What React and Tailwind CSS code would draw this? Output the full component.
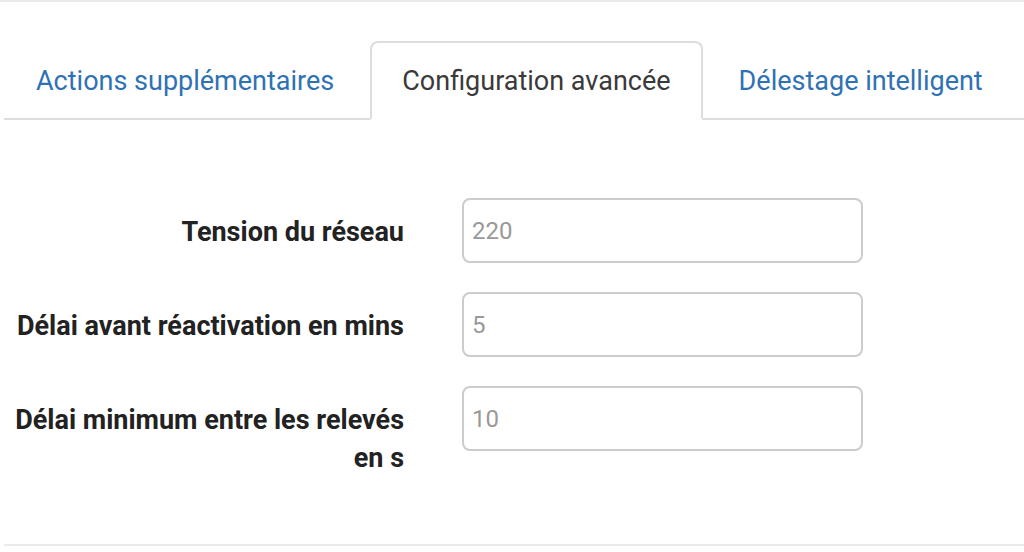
import React from "react";

const tabs = [
  { label: "Actions supplémentaires", active: false },
  { label: "Configuration avancée", active: true },
  { label: "Délestage intelligent", active: false },
];

const rows = [
  { label: ["Tension du réseau"], value: "220" },
  { label: ["Délai avant réactivation en mins"], value: "5" },
  { label: ["Délai minimum entre les relevés", "en s"], value: "10" },
];

export default function App() {
  return (
    <div
      className="w-[1024px] h-[552px] bg-white flex flex-col overflow-hidden"
      style={{ fontFamily: "Roboto, 'Liberation Sans', sans-serif" }}
    >
      <div className="h-[2px] bg-[#ebebeb] shrink-0" />
      <ul className="mt-[39px] ml-[4px] flex border-b-2 border-[#dddddd] shrink-0">
        {tabs.map((t) => (
          <li key={t.label} className="-mb-[2px] mr-[4px] shrink-0">
            <a
              className={
                t.active
                  ? "block whitespace-nowrap px-[30px] pt-[18px] pb-[17px] text-[27px] leading-[40px] border-2 border-[#dddddd] border-b-white rounded-t-[8px] bg-white text-[#3a3a3a]"
                  : "block whitespace-nowrap px-[30px] pt-[18px] pb-[17px] text-[27px] leading-[40px] border-2 border-transparent rounded-t-[8px] text-[#2f72b3]"
              }
            >
              {t.label}
            </a>
          </li>
        ))}
      </ul>
      <div className="mt-[78px] flex flex-col gap-[29px]">
        {rows.map((r) => (
          <div key={r.value} className="flex items-start">
            <div className="w-[404px] shrink-0 text-right pt-[15px] text-[27px] leading-[38px] font-bold text-[#222222] whitespace-nowrap">
              {r.label.map((l, i) => (
                <div key={i}>{l}</div>
              ))}
            </div>
            <input
              readOnly
              placeholder={r.value}
              className="ml-[58px] w-[401px] h-[65px] border-2 border-[#cccccc] rounded-[8px] px-[8px] text-[24px] text-[#555555] placeholder:text-[#999999] outline-none bg-white"
            />
          </div>
        ))}
      </div>
      <div className="mt-auto mb-[6px] ml-[4px] h-[2px] bg-[#ebebeb] shrink-0" />
    </div>
  );
}
